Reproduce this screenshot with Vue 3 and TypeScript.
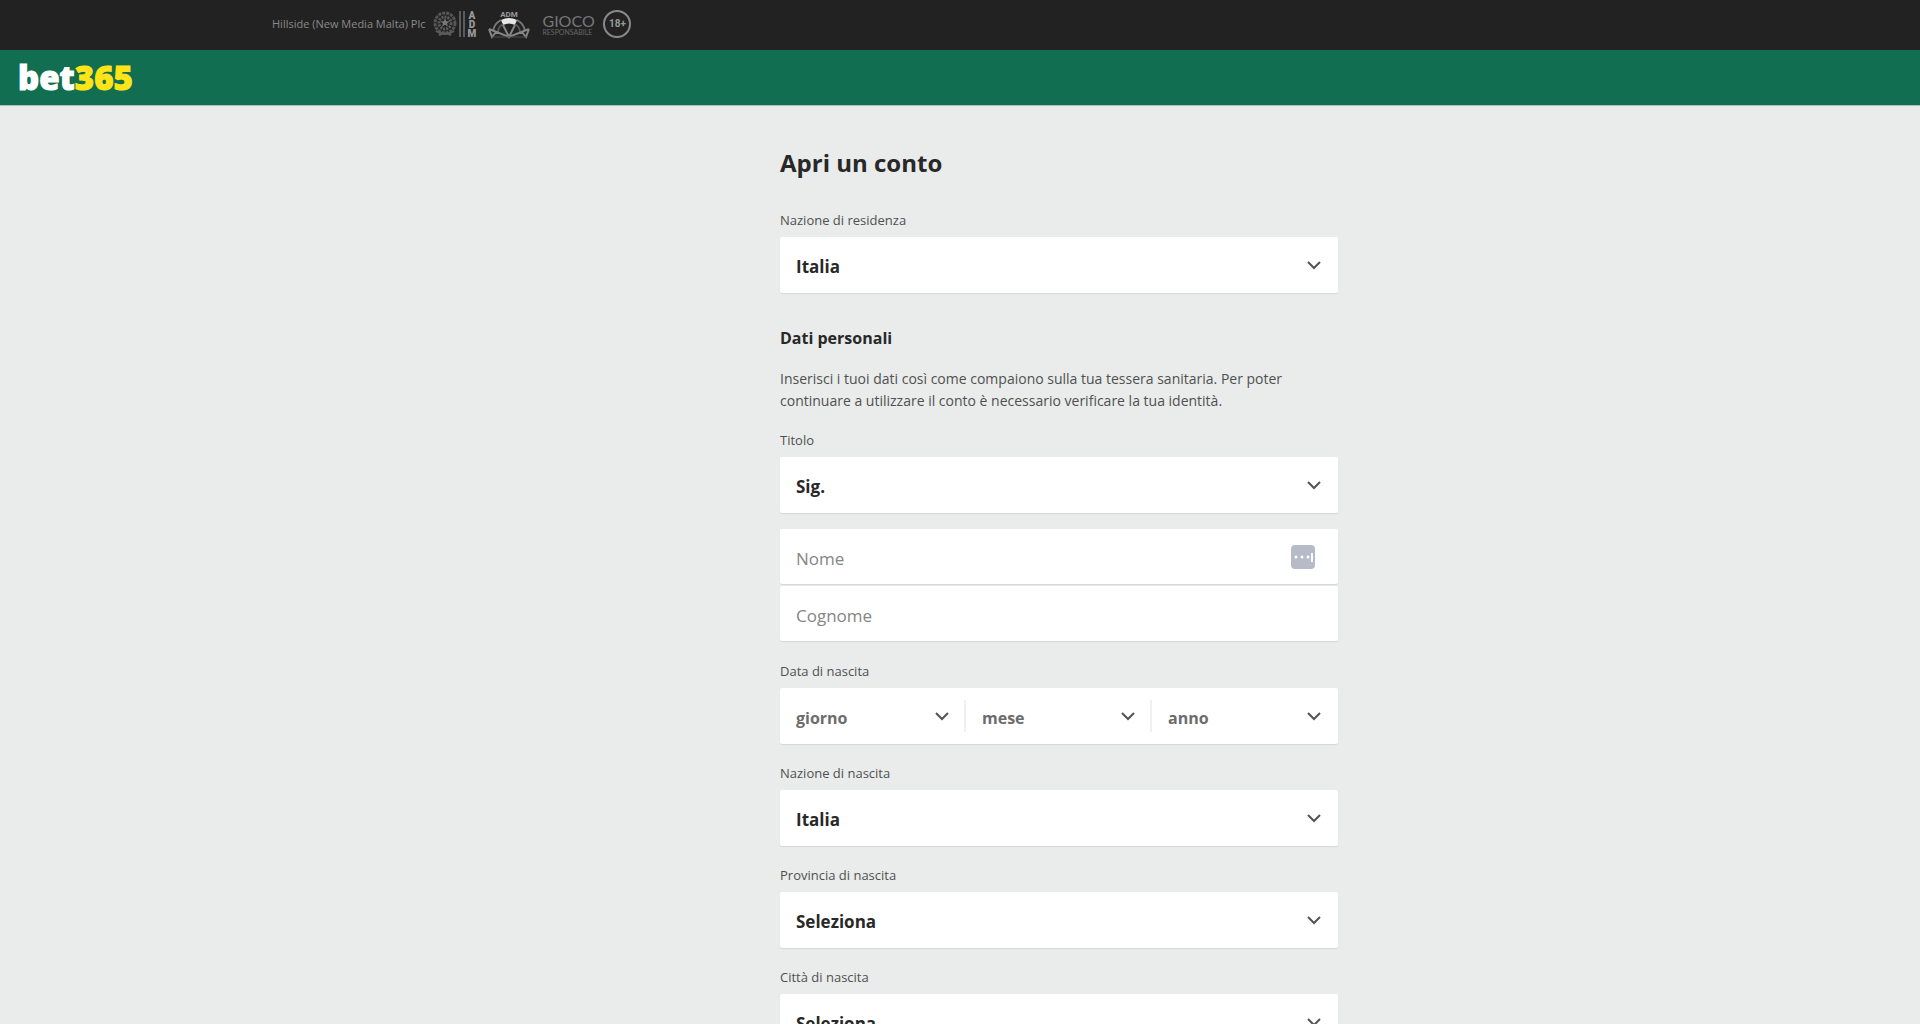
<script setup lang="ts">
import { reactive } from 'vue'

interface SelectField {
  id: 'birthCountry' | 'birthProvince' | 'birthCity'
  label: string
  options: string[]
}

const form = reactive({
  country: 'Italia',
  title: 'Sig.',
  firstName: '',
  lastName: '',
  day: 'giorno',
  month: 'mese',
  year: 'anno',
  birthCountry: 'Italia',
  birthProvince: 'Seleziona',
  birthCity: 'Seleziona',
})

const dateParts: { id: 'day' | 'month' | 'year'; label: string }[] = [
  { id: 'day', label: 'giorno' },
  { id: 'month', label: 'mese' },
  { id: 'year', label: 'anno' },
]

const birthFields: SelectField[] = [
  { id: 'birthCountry', label: 'Nazione di nascita', options: ['Italia'] },
  { id: 'birthProvince', label: 'Provincia di nascita', options: ['Seleziona'] },
  { id: 'birthCity', label: 'Città di nascita', options: ['Seleziona'] },
]
</script>

<template>
  <div class="page">
    <div class="legal">
      <span class="company">Hillside (New Media Malta) Plc</span>
      <div class="adm">
        <svg width="24" height="28" viewBox="0 0 24 28" fill="none" aria-hidden="true">
          <circle cx="12" cy="13" r="10" stroke-width="3" stroke-dasharray="3 1" stroke="#565656" />
          <circle cx="12" cy="13" r="6" stroke-width="3" stroke-dasharray="2 1" stroke="#5c5c5c" />
          <path d="M12 8l1.300 3.300h3.400l-2.700 2.100 1 3.400-3-2-3 2 1-3.400-2.700-2.100h3.400z" fill="#777" />
          <path d="M3 21q9 6 18 0M6 25q6-3 12 0" stroke-width="2" stroke="#5c5c5c" />
        </svg>
        <svg width="6" height="28" viewBox="0 0 6 28" aria-hidden="true">
          <path d="M1 1v26M5 1v26" stroke="#5c5c5c" stroke-width="2" />
        </svg>
        <span class="adm-letters"><b>A</b><b>D</b><b>M</b></span>
      </div>
      <svg class="bridge" width="42" height="32" viewBox="0 0 42 32" fill="none" stroke="#858585" aria-hidden="true">
        <text x="21" y="9" text-anchor="middle" fill="#999" stroke="none" font-size="8" font-weight="700" font-family="Roboto, sans-serif">ADM</text>
        <path d="M13 12q8-4 16 0l-2 5q-6-3-12 0z" fill="#e6e6e6" stroke="none" />
        <path d="M5 23q1-7 8-11M37 23q-1-7-8-11" stroke="#777" stroke-width="2" />
        <path d="M10 24q0-5 5-8M32 24q0-5-5-8" stroke="#555" stroke-width="2" />
        <path d="M1 21l20 8 20-8M1 21l3 8 4-5M41 21l-3 8-4-5M15 17l6 12 6-12" stroke-width="2" />
        <path d="M4 29h34" stroke="#4c4c4c" />
      </svg>
      <div class="gioco">
        <span class="gioco-main">GIOCO</span>
        <span class="gioco-sub">RESPONSABILE</span>
      </div>
      <span class="age">18+</span>
    </div>

    <header class="brand">
      <a class="logo" href="#">bet<span>365</span></a>
    </header>

    <main class="main">
      <form class="form" @submit.prevent>
        <h1>Apri un conto</h1>

        <div class="field">
          <label for="country">Nazione di residenza</label>
          <div class="box">
            <select id="country" v-model="form.country">
              <option>Italia</option>
            </select>
            <svg class="chevron" viewBox="0 0 16 10"><path d="M2 2l6 6 6-6" /></svg>
          </div>
        </div>

        <h2>Dati personali</h2>
        <p>
          Inserisci i tuoi dati così come compaiono sulla tua tessera sanitaria. Per poter
          continuare a utilizzare il conto è necessario verificare la tua identità.
        </p>

        <div class="field title-field">
          <label for="title">Titolo</label>
          <div class="box">
            <select id="title" v-model="form.title">
              <option>Sig.</option>
              <option>Sig.ra</option>
            </select>
            <svg class="chevron" viewBox="0 0 16 10"><path d="M2 2l6 6 6-6" /></svg>
          </div>
        </div>

        <div class="names">
          <div class="box">
            <input v-model="form.firstName" type="text" placeholder="Nome" aria-label="Nome" />
            <svg class="autofill" viewBox="0 0 24 24" aria-hidden="true">
              <rect width="24" height="24" rx="4" fill="#b7bbc7" />
              <circle cx="5" cy="12" r="1.500" fill="#fff" />
              <circle cx="11" cy="12" r="1.500" fill="#fff" />
              <circle cx="17" cy="12" r="1.500" fill="#fff" />
              <path d="M21 8v9" stroke="#fff" stroke-width="2" />
            </svg>
          </div>
          <div class="box">
            <input v-model="form.lastName" type="text" placeholder="Cognome" aria-label="Cognome" />
          </div>
        </div>

        <fieldset class="field">
          <legend>Data di nascita</legend>
          <div class="box dates">
            <div v-for="part in dateParts" :key="part.id" class="date-part">
              <select v-model="form[part.id]" :aria-label="part.label">
                <option>{{ part.label }}</option>
              </select>
              <svg class="chevron" viewBox="0 0 16 10"><path d="M2 2l6 6 6-6" /></svg>
            </div>
          </div>
        </fieldset>

        <div v-for="field in birthFields" :key="field.id" class="field">
          <label :for="field.id">{{ field.label }}</label>
          <div class="box">
            <select :id="field.id" v-model="form[field.id]">
              <option v-for="option in field.options" :key="option">{{ option }}</option>
            </select>
            <svg class="chevron" viewBox="0 0 16 10"><path d="M2 2l6 6 6-6" /></svg>
          </div>
        </div>
      </form>
    </main>
  </div>
</template>

<style>
body {
  margin: 0;
  background: #e9eceb;
}
</style>

<style scoped>
* {
  box-sizing: border-box;
}

.page {
  height: 100vh;
  overflow-y: auto;
  scrollbar-width: none;
  background: #e9eceb;
  color: #282828;
  font-family: 'Open Sans', 'Noto Sans', sans-serif;
}

.legal {
  display: flex;
  align-items: center;
  height: 50px;
  padding: 0 272px 2px;
  background: #222;
  color: #8a8a8a;
}

.company {
  margin-right: 8px;
  font-size: 11px;
  line-height: 16px;
  white-space: nowrap;
}

.adm {
  display: flex;
  align-items: center;
  gap: 2px;
  margin-right: 12px;
}

.adm-letters {
  display: flex;
  flex-direction: column;
  align-items: center;
  width: 9px;
  font: 700 10px/9px Roboto, sans-serif;
  color: #999;
}

.bridge {
  margin-right: 12px;
}

.gioco {
  display: flex;
  flex-direction: column;
  width: 50px;
  margin-right: 11px;
  font-family: Lato, sans-serif;
  color: #777;
}

.gioco-main {
  font-size: 16px;
  line-height: 15px;
}

.gioco-sub {
  font-size: 7px;
  line-height: 8px;
  color: #666;
}

.age {
  display: flex;
  align-items: center;
  justify-content: center;
  width: 28px;
  height: 28px;
  border: 2px solid #8a8a8a;
  border-radius: 50%;
  font: 700 10px/12px Roboto, sans-serif;
  color: #999;
}

.brand {
  display: flex;
  align-items: center;
  height: 56px;
  padding: 0 18px;
  background: #126e51;
  border-bottom: 1px solid #a5c4b9;
}

.logo {
  color: #fff;
  font: 800 33px/40px 'Open Sans', 'Noto Sans', sans-serif;
  -webkit-text-stroke: 1px currentColor;
  text-decoration: none;
}

.logo span {
  color: #ffe418;
}

.main {
  padding: 41px 20px 40px calc(50% - 180px);
}

.form {
  max-width: 558px;
}

h1 {
  margin: 0 0 26px;
  font-size: 24px;
  line-height: 32px;
}

h2 {
  margin: 31px 0 16px;
  font-size: 16px;
  line-height: 28px;
}

p {
  max-width: 510px;
  margin: 0;
  font-size: 14px;
  line-height: 22px;
  color: #505050;
}

.field {
  min-width: 0;
  margin: 0 0 14px;
  padding: 0;
  border: 0;
}

.title-field {
  margin-top: 13px;
  margin-bottom: 16px;
}

label,
legend {
  display: block;
  height: 32px;
  padding: 5px 0 0;
  font-size: 13px;
  line-height: 20px;
  color: #505050;
}

.box {
  position: relative;
  height: 56px;
  background: #fff;
  border-radius: 2px;
  box-shadow: 0 1px 1px #d5d8d7;
}

select,
input {
  display: block;
  width: 100%;
  height: 100%;
  padding: 4px 48px 0 16px;
  border: 0;
  background: transparent;
  appearance: none;
  outline: none;
  font: 700 17px/24px 'Open Sans', 'Noto Sans', sans-serif;
  color: #282828;
}

input {
  font-weight: 400;
}

input::placeholder {
  color: #858585;
  opacity: 1;
}

.chevron {
  position: absolute;
  top: 23px;
  right: 16px;
  width: 16px;
  height: 10px;
  fill: none;
  stroke: #545454;
  stroke-width: 2;
  pointer-events: none;
}

.autofill {
  position: absolute;
  top: 16px;
  right: 23px;
  width: 24px;
  height: 24px;
}

.names {
  display: flex;
  flex-direction: column;
  gap: 2px;
  margin-bottom: 15px;
}

.names .box {
  height: 55px;
}

.dates {
  display: flex;
}

.date-part {
  position: relative;
  flex: 1;
}

.date-part + .date-part::before {
  content: '';
  position: absolute;
  top: 12px;
  bottom: 12px;
  left: -2px;
  width: 2px;
  background: #eff1f0;
}

.date-part select {
  font-size: 16px;
  color: #6c6c6c;
}
</style>
